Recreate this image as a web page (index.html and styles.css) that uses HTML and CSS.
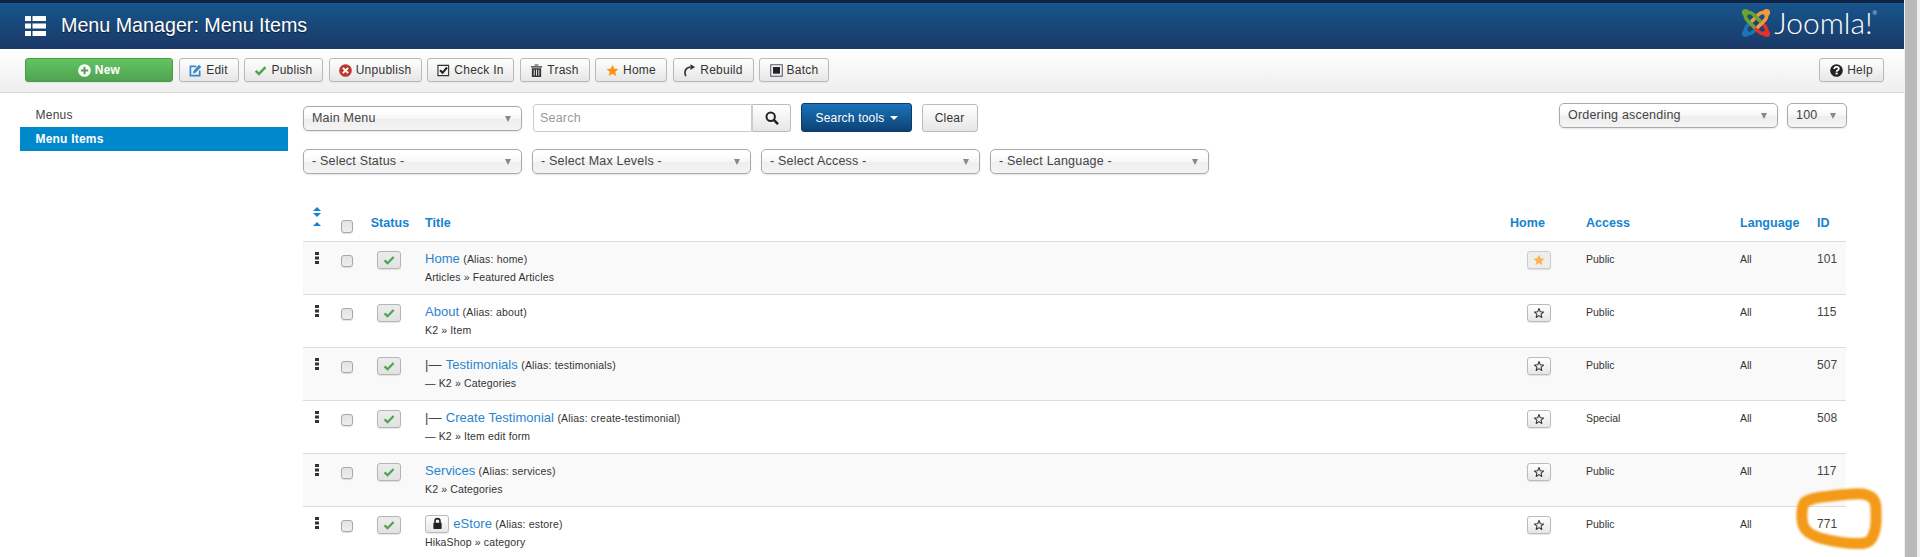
FILE: index.html
```html
<!DOCTYPE html>
<html lang="en">
<head>
<meta charset="utf-8">
<title>Menu Manager: Menu Items</title>
<link rel="stylesheet" href="styles.css">
</head>
<body>
<svg class="sprite" width="0" height="0" aria-hidden="true">
  <symbol id="i-star" viewBox="0 0 14 14"><path d="M7 .8 8.9 5 13.4 5.4 10 8.4 11 12.9 7 10.5 3 12.9 4 8.4.6 5.4 5.1 5Z"/></symbol>
  <symbol id="i-star-o" viewBox="0 0 14 14"><path fill="none" stroke="currentColor" stroke-width="1.2" stroke-linejoin="round" d="M7 1.800 8.500 5.600 12.300 5.900 9.400 8.400 10.300 12.200 7 10.100 3.700 12.200 4.600 8.400 1.700 5.900 5.500 5.600Z"/></symbol>
  <symbol id="i-check" viewBox="0 0 14 14"><path fill="none" stroke="currentColor" stroke-width="2.6" d="M1.800 7.400 5.300 10.700 12.400 3.400"/></symbol>
  <symbol id="i-drag" viewBox="0 0 4 12"><path fill="currentColor" d="M0 0h4v3H0zM0 4.500h4v3H0zM0 9h4v3H0z"/></symbol>
  <symbol id="i-lock" viewBox="0 0 12 14"><path fill="none" stroke="currentColor" stroke-width="1.7" d="M3.300 6.500V4.400a2.700 2.700 0 0 1 5.400 0v2.100"/><rect x="1.500" y="6.200" width="9" height="6.800" rx=".8" fill="currentColor"/></symbol>
  <symbol id="i-arm" viewBox="0 0 30 30"><path fill="none" stroke="currentColor" stroke-width="3.6" stroke-linecap="round" d="M5 4.500 Q9.500 3.500 12.500 6.500 L19 13 M4.500 5 Q3.500 9.500 6.500 12.500 L13 19"/><circle cx="4.500" cy="4.500" r="3.600" fill="currentColor"/></symbol>
</svg>

<div class="page">
  <div class="app">
    <header class="topbar">
      <svg class="title-icon" viewBox="0 0 21 20" aria-hidden="true"><path fill="#fff" d="M0 0h6v5H0zM7.500 0H21v5H7.500zM0 7.500h6v5H0zM7.500 7.500H21v5H7.500zM0 15h6v5H0zM7.500 15H21v5H7.500z"/></svg>
      <h1 class="page-title">Menu Manager: Menu Items</h1>
      <div class="brand">
        <svg class="brand-mark" viewBox="0 0 30 30" aria-hidden="true">
          <use href="#i-arm" class="arm-blue" transform="rotate(270 15 15)"/>
          <use href="#i-arm" class="arm-red" transform="rotate(180 15 15)"/>
          <use href="#i-arm" class="arm-orange" transform="rotate(90 15 15)"/>
          <use href="#i-arm" class="arm-green"/>
        </svg>
        <span class="brand-name">Joomla!</span><span class="brand-reg">®</span>
      </div>
    </header>

    <nav class="toolbar">
      <button class="btn btn-new"><svg class="ico" viewBox="0 0 14 14"><circle cx="7" cy="7" r="6.800" fill="#fff"/><path stroke="#51a351" stroke-width="2.200" d="M7 3v8M3 7h8"/></svg>New</button>
      <button class="btn btn-edit"><svg class="ico" viewBox="0 0 14 14"><path fill="none" stroke="#3a87c8" stroke-width="1.800" d="M8 2.500H1.500v10h10V7"/><path fill="#3a87c8" d="M5 7.200 10.800.8l2.400 2.300L7 9.500l-2.800.6Z"/></svg>Edit</button>
      <button class="btn btn-publish"><svg class="ico" viewBox="0 0 14 14"><use href="#i-check" class="c-green"/></svg>Publish</button>
      <button class="btn btn-unpublish"><svg class="ico" viewBox="0 0 14 14"><circle cx="7" cy="7" r="6.800" fill="#bd362f"/><path stroke="#fff" stroke-width="2.200" d="M4.200 4.200l5.600 5.600M9.800 4.200l-5.600 5.600"/></svg>Unpublish</button>
      <button class="btn btn-checkin"><svg class="ico" viewBox="0 0 14 14"><path fill="none" stroke="#333" stroke-width="1.200" d="M1 1.500h11.500v11H1z"/><path fill="none" stroke="#222" stroke-width="2.200" d="M3.300 6.700 6 9.500 10.800 3.800"/></svg>Check In</button>
      <button class="btn btn-trash"><svg class="ico" viewBox="0 0 14 14"><path fill="#333" d="M1 2.300h12v1.500H1zM5 .5h4v1.200H5zM2 4.500h10V14H2z"/><path stroke="#eee" d="M4.500 6v6.500M7 6v6.500M9.500 6v6.500"/></svg>Trash</button>
      <button class="btn btn-home"><svg class="ico c-orange" viewBox="0 0 14 14"><use href="#i-star"/></svg>Home</button>
      <button class="btn btn-rebuild"><svg class="ico" viewBox="0 0 14 14"><path fill="none" stroke="#333" stroke-width="1.800" d="M3 13C1 9.500 1.800 4 8 3.200"/><path fill="#333" d="M8 .4 13 3.200 8 6.400Z"/></svg>Rebuild</button>
      <button class="btn btn-batch"><svg class="ico" viewBox="0 0 14 14"><path fill="none" stroke="#556" stroke-width="1.100" d="M.8.800h12.400v12.400H.8z"/><path fill="#222" d="M3.200 3.200h7.600v7.200H3.200z"/></svg>Batch</button>
      <button class="btn btn-help"><svg class="ico" viewBox="0 0 14 14"><circle cx="7" cy="7" r="6.800" fill="#222"/><path fill="none" stroke="#fff" stroke-width="1.900" d="M4.500 5.400C4.700 3.700 5.700 3 7 3c1.500 0 2.500.9 2.500 2 0 1.800-2.400 1.700-2.400 3.400"/><path fill="#fff" d="M6 9.300h2.200v1.900H6z"/></svg>Help</button>
    </nav>

    <div class="content">
      <aside class="sidebar">
        <a class="side-link">Menus</a>
        <a class="side-link is-active">Menu Items</a>
      </aside>

      <main class="main">
        <div class="filters">
          <div class="select select-top">Main Menu</div>
          <div class="search-group">
            <div class="search-input">Search</div>
            <button class="search-btn"><svg class="search-ico" viewBox="0 0 14 14"><circle cx="5.700" cy="5.700" r="4.200" fill="none" stroke="#222" stroke-width="2"/><path stroke="#222" stroke-width="2.600" d="M8.800 8.800l4.200 4.300"/></svg></button>
          </div>
          <button class="tools-btn">Search tools<span class="caret"></span></button>
          <button class="clear-btn">Clear</button>
          <div class="sort-group">
            <div class="select">Ordering ascending</div>
            <div class="select select-small">100</div>
          </div>
        </div>
        <div class="filters-second">
          <div class="select">- Select Status -</div>
          <div class="select">- Select Max Levels -</div>
          <div class="select">- Select Access -</div>
          <div class="select">- Select Language -</div>
        </div>

        <table class="items">
          <colgroup>
            <col class="c-drag"><col class="c-box"><col class="c-status"><col class="c-title"><col class="c-home"><col class="c-access"><col class="c-lang"><col class="c-id">
          </colgroup>
          <thead>
            <tr>
              <th class="cell-drag"><span class="sort-both"></span><span class="sort-up"></span></th>
              <th class="cell-box"><input type="checkbox" class="cb"></th>
              <th class="cell-center">Status</th>
              <th>Title</th>
              <th>Home</th>
              <th>Access</th>
              <th>Language</th>
              <th>ID</th>
            </tr>
          </thead>
          <tbody>
            <tr>
              <td class="cell-drag"><svg class="drag"><use href="#i-drag"/></svg></td>
              <td class="cell-box"><input type="checkbox" class="cb"></td>
              <td class="cell-center"><span class="state"><svg class="state-ico"><use href="#i-check"/></svg></span></td>
              <td><div class="line"><a class="item-link">Home</a> <span class="alias">(Alias: home)</span></div><div class="type">Articles » Featured Articles</div></td>
              <td><span class="fav is-home"><svg class="fav-ico"><use href="#i-star"/></svg></span></td>
              <td class="small">Public</td><td class="small">All</td><td class="num">101</td>
            </tr>
            <tr>
              <td class="cell-drag"><svg class="drag"><use href="#i-drag"/></svg></td>
              <td class="cell-box"><input type="checkbox" class="cb"></td>
              <td class="cell-center"><span class="state"><svg class="state-ico"><use href="#i-check"/></svg></span></td>
              <td><div class="line"><a class="item-link">About</a> <span class="alias">(Alias: about)</span></div><div class="type">K2 » Item</div></td>
              <td><span class="fav"><svg class="fav-ico"><use href="#i-star-o"/></svg></span></td>
              <td class="small">Public</td><td class="small">All</td><td class="num">115</td>
            </tr>
            <tr>
              <td class="cell-drag"><svg class="drag"><use href="#i-drag"/></svg></td>
              <td class="cell-box"><input type="checkbox" class="cb"></td>
              <td class="cell-center"><span class="state"><svg class="state-ico"><use href="#i-check"/></svg></span></td>
              <td><div class="line"><span class="tree">|—</span> <a class="item-link">Testimonials</a> <span class="alias">(Alias: testimonials)</span></div><div class="type">— K2 » Categories</div></td>
              <td><span class="fav"><svg class="fav-ico"><use href="#i-star-o"/></svg></span></td>
              <td class="small">Public</td><td class="small">All</td><td class="num">507</td>
            </tr>
            <tr>
              <td class="cell-drag"><svg class="drag"><use href="#i-drag"/></svg></td>
              <td class="cell-box"><input type="checkbox" class="cb"></td>
              <td class="cell-center"><span class="state"><svg class="state-ico"><use href="#i-check"/></svg></span></td>
              <td><div class="line"><span class="tree">|—</span> <a class="item-link">Create Testimonial</a> <span class="alias">(Alias: create-testimonial)</span></div><div class="type">— K2 » Item edit form</div></td>
              <td><span class="fav"><svg class="fav-ico"><use href="#i-star-o"/></svg></span></td>
              <td class="small">Special</td><td class="small">All</td><td class="num">508</td>
            </tr>
            <tr>
              <td class="cell-drag"><svg class="drag"><use href="#i-drag"/></svg></td>
              <td class="cell-box"><input type="checkbox" class="cb"></td>
              <td class="cell-center"><span class="state"><svg class="state-ico"><use href="#i-check"/></svg></span></td>
              <td><div class="line"><a class="item-link">Services</a> <span class="alias">(Alias: services)</span></div><div class="type">K2 » Categories</div></td>
              <td><span class="fav"><svg class="fav-ico"><use href="#i-star-o"/></svg></span></td>
              <td class="small">Public</td><td class="small">All</td><td class="num">117</td>
            </tr>
            <tr>
              <td class="cell-drag"><svg class="drag"><use href="#i-drag"/></svg></td>
              <td class="cell-box"><input type="checkbox" class="cb"></td>
              <td class="cell-center"><span class="state"><svg class="state-ico"><use href="#i-check"/></svg></span></td>
              <td><div class="line"><span class="lock"><svg class="lock-ico"><use href="#i-lock"/></svg></span> <a class="item-link">eStore</a> <span class="alias">(Alias: estore)</span></div><div class="type">HikaShop » category</div></td>
              <td><span class="fav"><svg class="fav-ico"><use href="#i-star-o"/></svg></span></td>
              <td class="small">Public</td><td class="small">All</td><td class="num">771</td>
            </tr>
          </tbody>
        </table>
      </main>
    </div>
  </div>
  <div class="scrollbar"><div class="thumb"></div></div>

  <svg class="scribble" viewBox="0 0 90 66" aria-hidden="true">
    <path d="M10 16C17 12 24 11 32 10.500 46 9 58 7 68 8 78 10 81 14 81 24 81 33 82 40 79 47 77 54 74 57 66 57.500 55 58 40 56 25 52 16 49 11 46 9 41 6 35 6 21 10 16Z"/>
  </svg>
</div>
</body>
</html>
```

FILE: styles.css
```css
* { box-sizing: border-box; }
html, body { margin: 0; padding: 0; }
body {
  width: 1920px;
  height: 557px;
  overflow: hidden;
  background: #fff;
  color: #333;
  font-family: "Liberation Sans", Arial, sans-serif;
  font-size: 12px;
}
.sprite { position: absolute; }
.page { display: flex; height: 557px; position: relative; overflow: hidden; }
.app { flex: 1; min-width: 0; }

/* Scrollbar */
.scrollbar { width: 16px; background: #f1f1f1; padding: 0 3px 0 1px; flex: none; }
.thumb { height: 100%; background: #b9b9b9; }

/* Header */
.topbar {
  height: 49px;
  border-top: 3px solid #0f2343;
  background: linear-gradient(#17568c, #1a3867);
  display: flex;
  align-items: center;
  padding-left: 25px;
  color: #fff;
}
.title-icon { width: 21px; height: 20px; flex: none; margin-top: -1px; }
.page-title {
  margin: -1px 0 0 15px;
  font-size: 19.700px;
  font-weight: 400;
  text-shadow: 0 1px 1px rgba(0,0,0,.6);
}
.brand { margin-left: auto; display: flex; align-items: flex-start; padding-right: 27px; height: 46px; }
.brand-mark { width: 30px; height: 30px; margin-top: 5px; }
.arm-green { color: #6ba52f; }
.arm-orange { color: #f39a3c; }
.arm-red { color: #e2302b; }
.arm-blue { color: #1e73b8; }
.brand-name {
  font-family: Lato, "Open Sans", sans-serif;
  font-weight: 300;
  font-size: 30px;
  line-height: 36px;
  margin: 1px 0 0 3px;
  color: #fff;
}
.brand-reg { font-size: 6px; margin: 7px 0 0 0; color: #dfe7ef; }

/* Toolbar */
.toolbar {
  height: 44px;
  padding: 9px 20px 0 25px;
  border-bottom: 1px solid #d8d8d8;
  background: linear-gradient(#fff, #eee);
  display: flex;
  align-items: flex-start;
  gap: 5.500px;
}
.btn {
  height: 24px;
  padding: 0;
  border: 1px solid #b9b9b9;
  border-radius: 3px;
  background: linear-gradient(#fff, #e6e6e6);
  box-shadow: 0 1px 1px rgba(0,0,0,.05);
  display: inline-flex;
  align-items: center;
  justify-content: center;
  gap: 4px;
  flex: none;
  color: #333;
  font: 12px "Liberation Sans", Arial, sans-serif;
  letter-spacing: .25px;
}
.btn-new {
  width: 148px;
  border-color: #4a9a47;
  background: linear-gradient(#62c462, #51a351);
  color: #fff;
  font-weight: 700;
}
.btn-edit { width: 60px; }
.btn-publish { width: 79px; }
.btn-unpublish { width: 93px; }
.btn-checkin { width: 87px; }
.btn-trash { width: 70px; }
.btn-home { width: 72px; }
.btn-rebuild { width: 81px; }
.btn-batch { width: 70px; }
.btn-help { width: 65px; margin-left: auto; }
.ico { width: 13px; height: 13px; flex: none; }
.c-green { color: #51a351; }
.c-orange { fill: #ff8f0f; }

/* Content */
.content { display: flex; padding-left: 20px; }
.sidebar { width: 268px; flex: none; padding-top: 10px; }
.side-link {
  display: block;
  height: 24px;
  line-height: 24px;
  padding-left: 15.500px;
  font-size: 12px;
  letter-spacing: .25px;
  color: #444;
}
.side-link.is-active { background: #0088cc; color: #fff; font-weight: 700; letter-spacing: .2px; }
.main { width: 1544px; margin-left: 15px; padding-top: 10px; }

/* Filters */
.filters { display: flex; align-items: flex-start; width: 1544px; height: 29px; }
.filters-second { display: flex; gap: 10px; margin-top: 17px; }
.select {
  position: relative;
  width: 219px;
  height: 25px;
  line-height: 23px;
  padding-left: 8px;
  border: 1px solid #aaa;
  border-radius: 5px;
  background: linear-gradient(#fff 20%, #f6f6f6 50%, #eee 52%, #f4f4f4 100%);
  box-shadow: 0 1px 2px rgba(0,0,0,.1);
  color: #444;
  font-size: 12.500px;
  letter-spacing: .2px;
}
.select::after {
  content: "";
  position: absolute;
  right: 10px;
  top: 9px;
  border: 3.500px solid transparent;
  border-top: 6px solid #888;
  border-bottom: 0;
}
.select-top { margin-top: 3px; }
.select-small { width: 60px; margin-left: 9px; }
.search-group { display: flex; margin: 1px 0 0 11px; }
.search-input {
  width: 219px;
  height: 28px;
  line-height: 26px;
  padding-left: 6px;
  border: 1px solid #ccc;
  border-radius: 3px 0 0 3px;
  background: #fff;
  color: #999;
  font-size: 12.500px;
  letter-spacing: .2px;
}
.search-btn {
  width: 39px;
  height: 28px;
  padding: 0;
  border: 1px solid #bbb;
  border-left-color: #ccc;
  border-radius: 0 3px 3px 0;
  background: linear-gradient(#fff, #e6e6e6);
  display: flex;
  align-items: center;
  justify-content: center;
}
.search-ico { width: 14px; height: 14px; }
.tools-btn {
  width: 111px;
  height: 29px;
  margin-left: 10px;
  padding: 0;
  border: 1px solid #0d3a66;
  border-radius: 3px;
  background: linear-gradient(#1a73bb, #0d4273);
  color: #fff;
  font: 12px "Liberation Sans", Arial, sans-serif;
  letter-spacing: .2px;
}
.caret {
  display: inline-block;
  margin-left: 5px;
  vertical-align: middle;
  border: 4px solid transparent;
  border-top-color: #fff;
  border-bottom: 0;
}
.clear-btn {
  width: 56px;
  height: 28px;
  margin: 1px 0 0 9.500px;
  padding: 0;
  border: 1px solid #bbb;
  border-radius: 3px;
  background: linear-gradient(#fff, #e6e6e6);
  color: #333;
  font: 12px "Liberation Sans", Arial, sans-serif;
  letter-spacing: .2px;
}
.sort-group { margin-left: auto; display: flex; }

/* Table */
.items {
  width: 1543px;
  margin-top: 20px;
  border-collapse: collapse;
  table-layout: fixed;
}
.c-drag { width: 28px; }
.c-box { width: 32px; }
.c-status { width: 52px; }
.c-title { width: 1085px; }
.c-home { width: 76px; }
.c-access { width: 154px; }
.c-lang { width: 77px; }
.c-id { width: 39px; }
.items th {
  height: 47px;
  padding: 0 0 11px 10px;
  text-align: left;
  vertical-align: bottom;
  color: #1583cf;
  font-size: 12.500px;
  font-weight: 700;
  letter-spacing: .05px;
}
.items th.cell-center { text-align: center; padding: 0 0 11px 2px; }
.items th.cell-drag, .items th.cell-box, .items td.cell-drag, .items td.cell-box { padding: 0; text-align: center; }
.items th.cell-drag { vertical-align: bottom; padding-bottom: 15px; }
.items th.cell-box { padding-bottom: 8px; }
.sort-both, .sort-up { display: block; margin: 0 auto; width: 0; border: 4px solid transparent; border-top: 0; border-bottom: 4.500px solid #1583cf; }
.sort-both { position: relative; margin-bottom: 9px; }
.sort-both::after {
  content: "";
  position: absolute;
  left: -4px;
  top: 6px;
  border: 4px solid transparent;
  border-bottom: 0;
  border-top: 4.500px solid #1583cf;
}
.sort-up { margin-top: 11px; }
.items tbody tr { height: 53px; border-top: 1px solid #ddd; }
.items tbody tr:nth-child(odd) { background: #f9f9f9; }
.items td { padding: 8px 0 0 10px; vertical-align: top; }
.items td.cell-center { padding-left: 0; text-align: center; padding-top: 9px; }
.items td.cell-drag { padding-top: 10px; vertical-align: top; }
.items td.cell-box { padding-top: 13px; vertical-align: top; }
.drag { display: block; width: 4px; height: 12px; margin: 0 auto; color: #333; }
.cb {
  appearance: none;
  display: block;
  width: 12px;
  height: 12.500px;
  margin: 0 auto;
  border: 1px solid #a8a8a8;
  border-radius: 3px;
  background: linear-gradient(#e3e3e3, #eee);
  box-shadow: 0 1px 1px rgba(0,0,0,.12);
}
.state, .fav, .lock {
  display: inline-flex;
  width: 24px;
  height: 18px;
  border: 1px solid #bbb;
  border-radius: 3px;
  align-items: center;
  justify-content: center;
  vertical-align: top;
  background: linear-gradient(#fff, #e6e6e6);
  box-shadow: 0 1px 1px rgba(0,0,0,.1);
}
.state { background: linear-gradient(#ececec, #e2e2e2); color: #51a351; border-color: #b5b5b5; }
.state-ico { width: 12px; height: 12px; }
.fav { margin: 1px 0 0 17px; color: #333; }
.fav.is-home { background: #eee; border-color: #ccc; fill: #fbb450; }
.fav-ico { width: 12px; height: 12px; }
.lock { color: #222; margin-right: 1px; }
.lock-ico { width: 11px; height: 13px; }
.line { height: 18px; line-height: 18px; white-space: nowrap; }
.item-link { color: #2a84cd; font-size: 13px; letter-spacing: .05px; }
.tree { font-size: 13px; color: #444; margin-right: 1px; }
.alias { font-size: 10.500px; color: #333; letter-spacing: .17px; }
.type { font-size: 10.500px; line-height: 18px; color: #333; letter-spacing: .15px; }
.small { font-size: 10.500px; line-height: 18px; color: #333; }
.items td.num { padding-top: 9px; font-size: 12px; line-height: 17px; color: #444; letter-spacing: .1px; }

/* Hand-drawn highlight over the last ID */
.scribble {
  position: absolute;
  left: 1795px;
  top: 486px;
  width: 90px;
  height: 66px;
  fill: none;
  stroke: #f39a18;
  stroke-width: 11px;
  stroke-linejoin: round;
  filter: blur(.8px);
}
```
